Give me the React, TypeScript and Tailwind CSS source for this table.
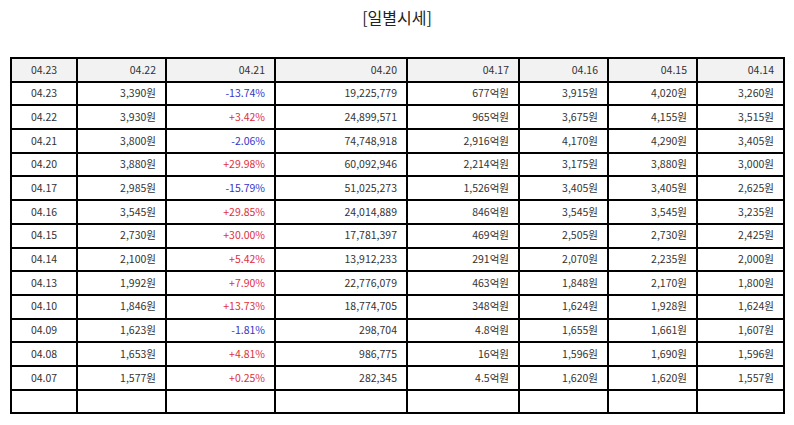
import React from "react";

const rows: string[][] = [
  ["04.23", "3,390원", "-13.74%", "19,225,779", "677억원", "3,915원", "4,020원", "3,260원"],
  ["04.22", "3,930원", "+3.42%", "24,899,571", "965억원", "3,675원", "4,155원", "3,515원"],
  ["04.21", "3,800원", "-2.06%", "74,748,918", "2,916억원", "4,170원", "4,290원", "3,405원"],
  ["04.20", "3,880원", "+29.98%", "60,092,946", "2,214억원", "3,175원", "3,880원", "3,000원"],
  ["04.17", "2,985원", "-15.79%", "51,025,273", "1,526억원", "3,405원", "3,405원", "2,625원"],
  ["04.16", "3,545원", "+29.85%", "24,014,889", "846억원", "3,545원", "3,545원", "3,235원"],
  ["04.15", "2,730원", "+30.00%", "17,781,397", "469억원", "2,505원", "2,730원", "2,425원"],
  ["04.14", "2,100원", "+5.42%", "13,912,233", "291억원", "2,070원", "2,235원", "2,000원"],
  ["04.13", "1,992원", "+7.90%", "22,776,079", "463억원", "1,848원", "2,170원", "1,800원"],
  ["04.10", "1,846원", "+13.73%", "18,774,705", "348억원", "1,624원", "1,928원", "1,624원"],
  ["04.09", "1,623원", "-1.81%", "298,704", "4.8억원", "1,655원", "1,661원", "1,607원"],
  ["04.08", "1,653원", "+4.81%", "986,775", "16억원", "1,596원", "1,690원", "1,596원"],
  ["04.07", "1,577원", "+0.25%", "282,345", "4.5억원", "1,620원", "1,620원", "1,557원"],
];

const header = ["04.23", "04.22", "04.21", "04.20", "04.17", "04.16", "04.15", "04.14"];
const widths = ["w-[66px]", "w-[89px]", "w-[109px]", "w-[132px]", "w-[112px]", "w-[89px]", "w-[89px]", "w-[87px]"];

export default function App() {
  return (
    <div
      className="w-[794px] h-[425px] bg-white overflow-hidden text-[#333333]"
      style={{ fontFamily: '"Noto Sans CJK KR", "Noto Sans", sans-serif' }}
    >
      <div className="h-[36px] pt-[5px] text-center text-[16px] leading-[24px] text-[#222]">[일별시세]</div>
      <div className="pl-[10px] pt-[21px]">
        <table className="border-collapse w-[773px] table-fixed text-[10.5px]">
          <colgroup>
            {widths.map((w, i) => (
              <col key={i} className={w} />
            ))}
          </colgroup>
          <thead>
            <tr className="h-[23.7px] bg-[#f2f2f2]">
              {header.map((h, i) => (
                <td
                  key={i}
                  className={`border-2 border-black p-0 leading-none ${i === 0 ? "text-center" : "text-right pr-[9px]"}`}
                >
                  {h}
                </td>
              ))}
            </tr>
          </thead>
          <tbody>
            {rows.map((r, ri) => (
              <tr key={ri} className="h-[23.7px]">
                {r.map((c, i) => {
                  let color = "";
                  if (i === 2) color = c.startsWith("-") ? "text-[#3535c8]" : "text-[#e0303a]";
                  return (
                    <td
                      key={i}
                      className={`border-2 border-black p-0 leading-none ${i === 0 ? "text-center" : "text-right pr-[9px]"} ${color}`}
                    >
                      {c}
                    </td>
                  );
                })}
              </tr>
            ))}
            <tr className="h-[23.7px]">
              {header.map((_, i) => (
                <td key={i} className="border-2 border-black p-0"></td>
              ))}
            </tr>
          </tbody>
        </table>
      </div>
    </div>
  );
}
